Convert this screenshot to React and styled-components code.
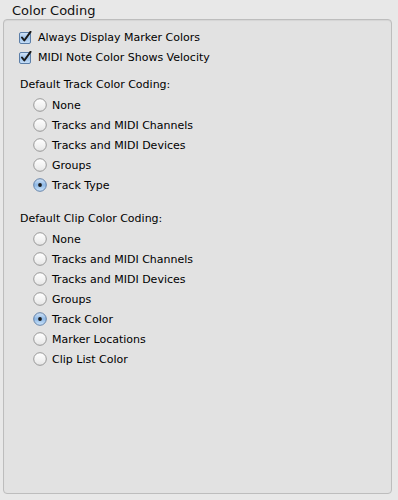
import styled, { createGlobalStyle } from "styled-components";

const GlobalStyle = createGlobalStyle`
  html, body {
    margin: 0;
    padding: 0;
    background: #e8e8e8;
  }
  body {
    font-family: "DejaVu Sans", "Liberation Sans", sans-serif;
    color: #000000;
  }
`;

const trackOptions = ["None", "Tracks and MIDI Channels", "Tracks and MIDI Devices", "Groups", "Track Type"];
const clipOptions = ["None", "Tracks and MIDI Channels", "Tracks and MIDI Devices", "Groups", "Track Color", "Marker Locations", "Clip List Color"];

function CheckIcon() {
  return (
    <svg width="13" height="13" viewBox="0 0 13 13">
      <defs>
        <linearGradient id="cbg" x1="0" y1="0" x2="0" y2="1">
          <stop offset="0" stopColor="#d6e6f7" />
          <stop offset="0.5" stopColor="#9cc2ea" />
          <stop offset="1" stopColor="#c9e0f8" />
        </linearGradient>
      </defs>
      <rect x="0.5" y="1.5" width="11" height="11" rx="1.5" fill="url(#cbg)" stroke="#5b7ea8" />
      <path d="M3 6.5 L5.3 9.5 L11.5 0.8" fill="none" stroke="#1a1a1a" strokeWidth="2" strokeLinecap="round" strokeLinejoin="round" />
    </svg>
  );
}

function RadioIcon({ on }) {
  const id = on ? "rgOn" : "rgOff";
  return (
    <svg width="14" height="14" viewBox="0 0 14 14">
      <defs>
        <linearGradient id={id} x1="0" y1="0" x2="0" y2="1">
          {on ? (
            <>
              <stop offset="0" stopColor="#d3e4f6" />
              <stop offset="0.5" stopColor="#8fb9e6" />
              <stop offset="1" stopColor="#cfe6fb" />
            </>
          ) : (
            <>
              <stop offset="0" stopColor="#ffffff" />
              <stop offset="0.6" stopColor="#f1f1f1" />
              <stop offset="1" stopColor="#e4e4e4" />
            </>
          )}
        </linearGradient>
      </defs>
      <circle cx="7" cy="7" r="6.3" fill={`url(#${id})`} stroke={on ? "#5877a0" : "#8e8e8e"} strokeWidth="0.9" />
      {on && <circle cx="7" cy="7" r="1.9" fill="#1b1b1b" />}
    </svg>
  );
}

export default function App() {
  return (
    <>
      <GlobalStyle />
      <Page>
        <Title>Color Coding</Title>
        <GroupBox>
          <CheckRow>
            <CheckIcon />
            <span>Always Display Marker Colors</span>
          </CheckRow>
          <CheckRow>
            <CheckIcon />
            <span>MIDI Note Color Shows Velocity</span>
          </CheckRow>

          <SectionLabel>Default Track Color Coding:</SectionLabel>
          <RadioList>
            {trackOptions.map((o) => (
              <RadioRow key={o}>
                <RadioIcon on={o === "Track Type"} />
                <span>{o}</span>
              </RadioRow>
            ))}
          </RadioList>

          <SectionLabel $gap={14}>Default Clip Color Coding:</SectionLabel>
          <RadioList>
            {clipOptions.map((o) => (
              <RadioRow key={o}>
                <RadioIcon on={o === "Track Color"} />
                <span>{o}</span>
              </RadioRow>
            ))}
          </RadioList>
        </GroupBox>
      </Page>
    </>
  );
}

const Page = styled.div`
  width: 398px;
  height: 500px;
  box-sizing: border-box;
  padding: 0 6px 6px 3px;
  display: flex;
  flex-direction: column;
`;

const Title = styled.div`
  height: 16px;
  line-height: 16px;
  padding: 3px 0 0 9px;
  font-size: 13px;
  color: #111111;
`;

const GroupBox = styled.div`
  flex: 1;
  box-sizing: border-box;
  border: 1px solid #bdbdbd;
  border-radius: 4px;
  background: #e2e2e2;
  box-shadow: inset 0 1px 1px rgba(0, 0, 0, 0.06);
  padding: 7px 0 0 15px;
  display: flex;
  flex-direction: column;
`;

const CheckRow = styled.div`
  height: 20px;
  display: flex;
  align-items: center;
  gap: 6px;
  font-size: 11px;
  padding-top: 1px;
  box-sizing: border-box;
`;

const SectionLabel = styled.div`
  height: 20px;
  line-height: 20px;
  margin-top: ${(p) => (p.$gap ?? 8)}px;
  padding-left: 1px;
  font-size: 11px;
`;

const RadioList = styled.div`
  display: flex;
  flex-direction: column;
  padding-left: 14px;
`;

const RadioRow = styled.div`
  height: 20px;
  display: flex;
  align-items: center;
  gap: 5px;
  font-size: 11px;
`;
